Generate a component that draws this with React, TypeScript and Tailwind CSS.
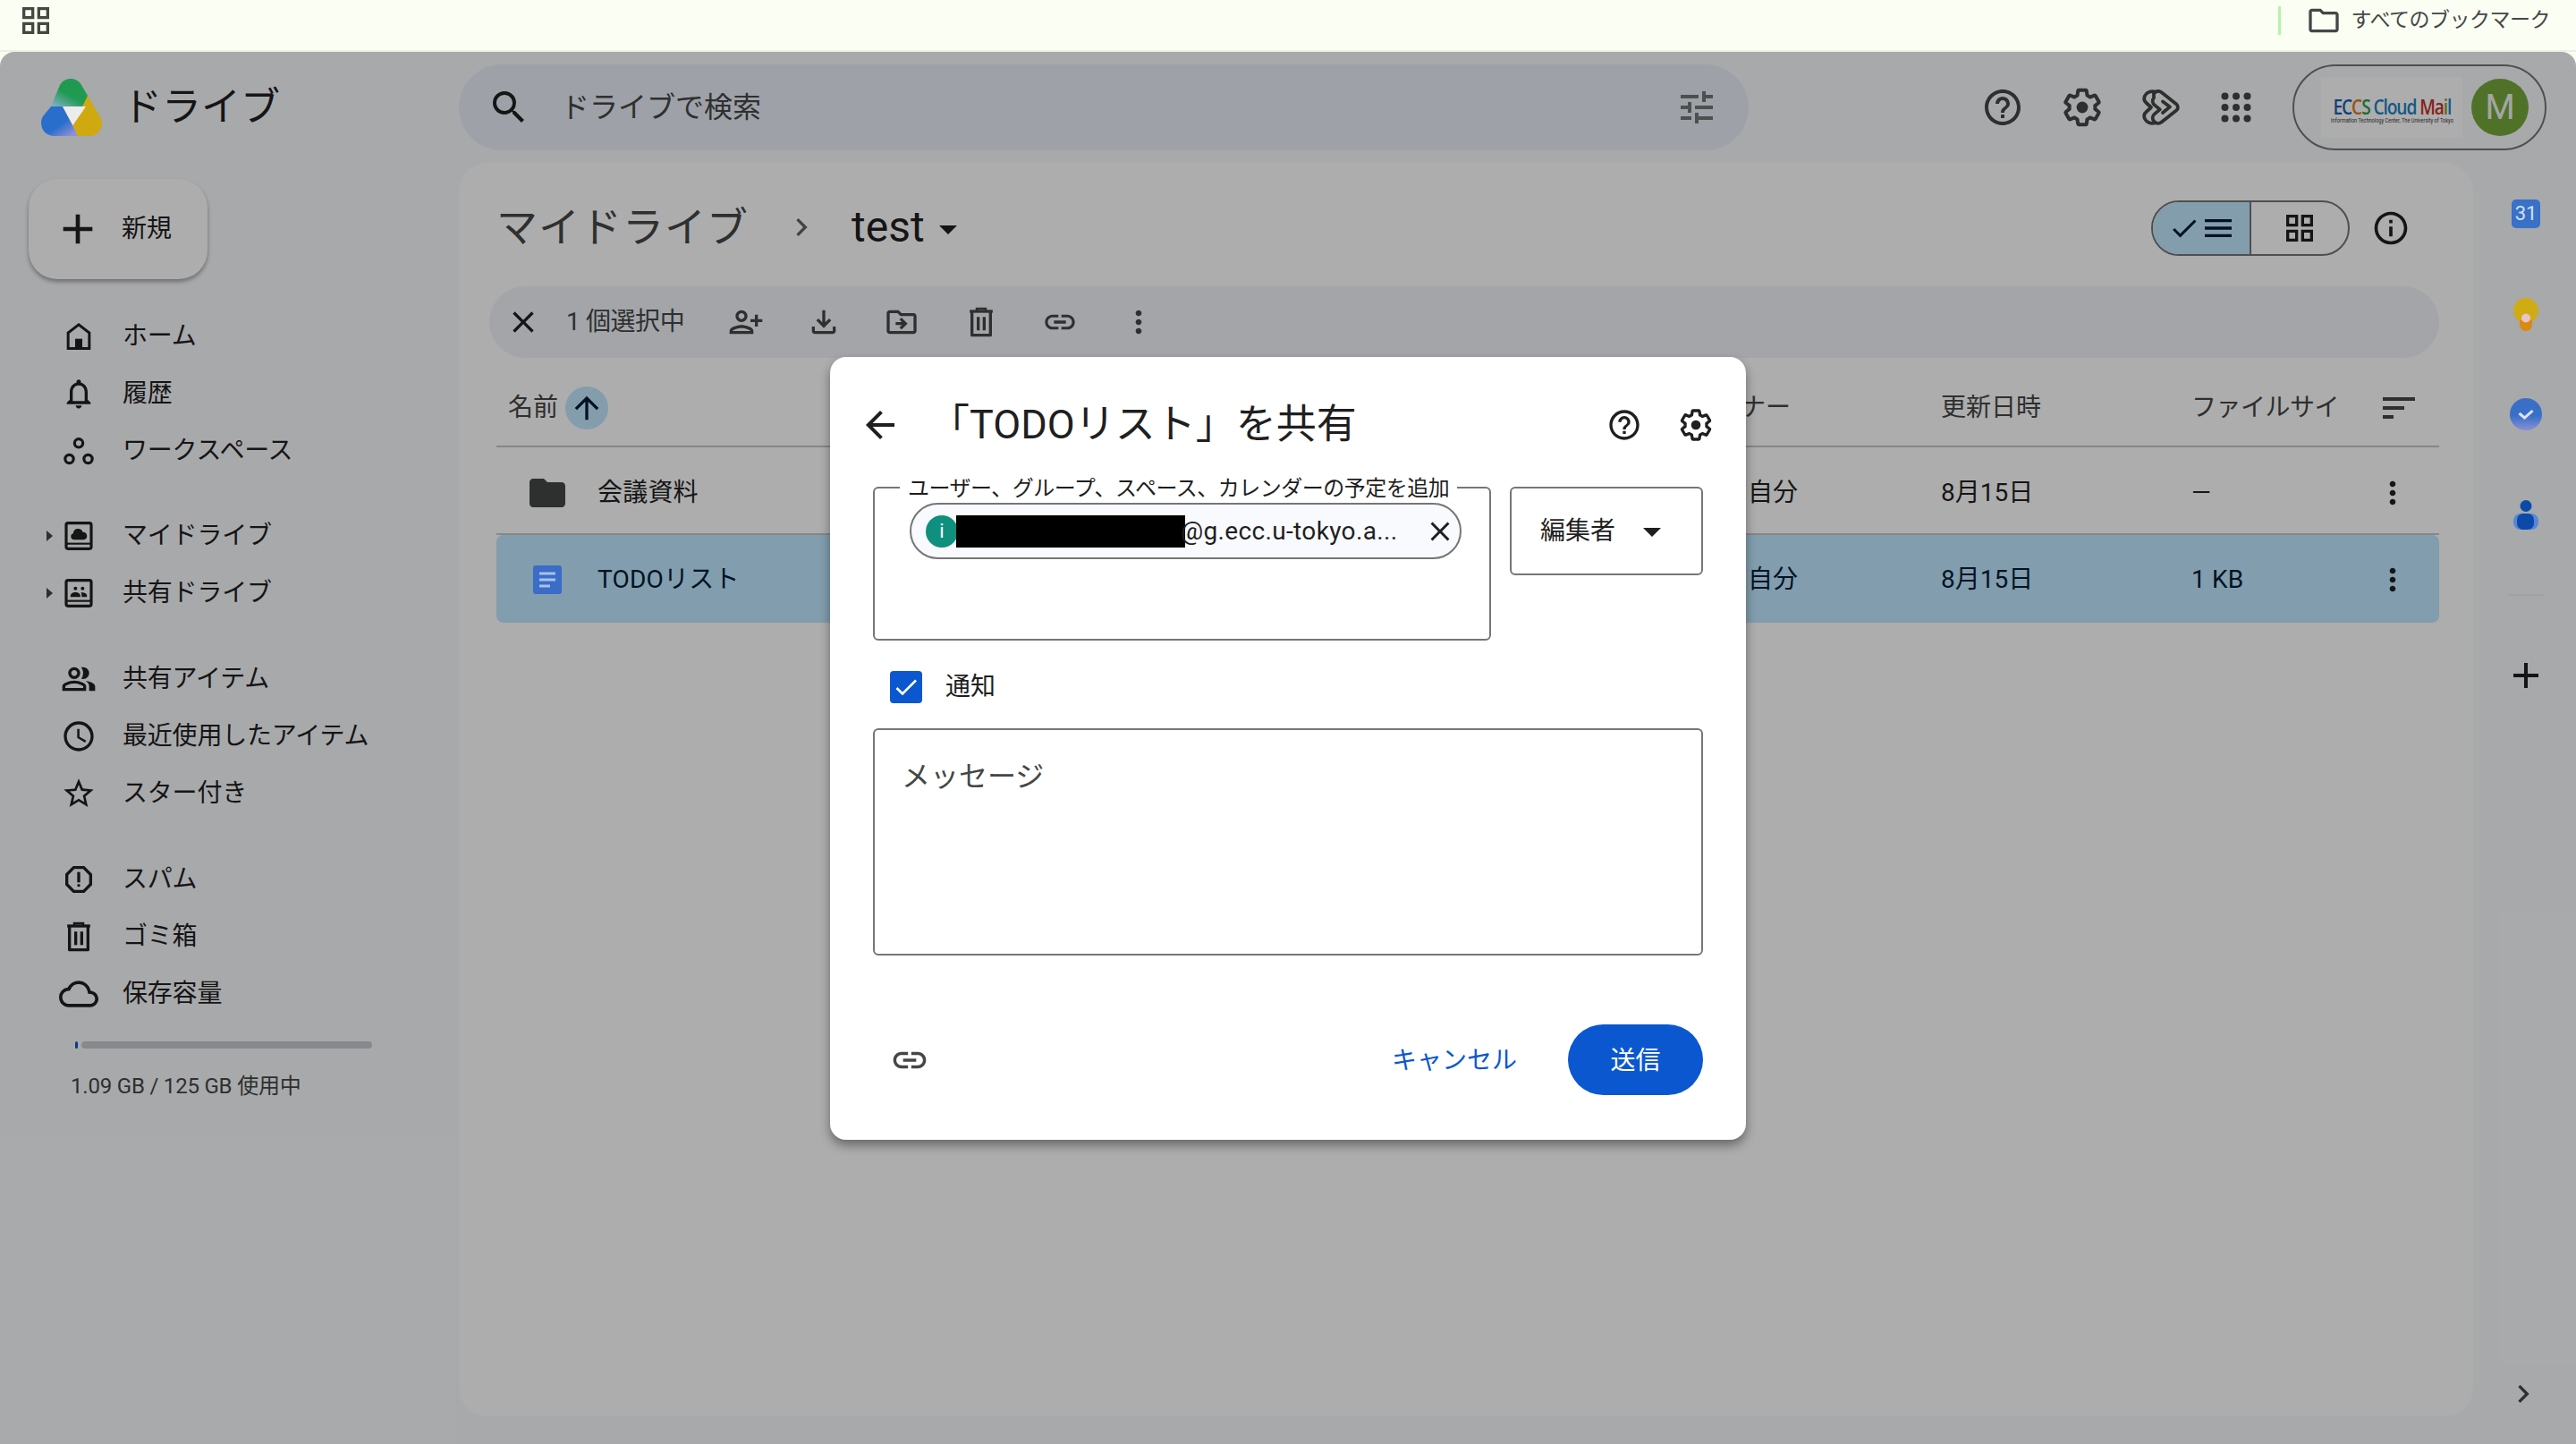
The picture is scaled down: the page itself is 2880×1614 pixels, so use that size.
import React from "react";
import {
  MdAdd, MdSearch, MdTune, MdHelpOutline, MdOutlineNotifications, MdOutlinePeopleAlt,
  MdAccessTime, MdStarBorder, MdOutlineReport, MdOutlineCloud, MdCheck, MdMenu,
  MdOutlineGridView, MdInfoOutline, MdClose, MdOutlinePersonAddAlt1, MdOutlineFileDownload,
  MdOutlineDriveFileMove, MdLink, MdMoreVert, MdArrowUpward, MdSort, MdFolder, MdArrowBack,
  MdArrowDropDown, MdChevronRight, MdOutlineFolder,
} from "react-icons/md";

const HomeIcon = () => (
  <svg viewBox="0 0 24 24" className="size-10" fill="currentColor">
    <path d="M12 3 4 9.2V21h16V9.2L12 3zm6.2 16.2H5.8v-9.1L12 5.3l6.2 4.8v9.1z" />
    <rect x="9.6" y="13.6" width="4.8" height="6" />
  </svg>
);
const WorkspaceIcon = () => (
  <svg viewBox="0 0 24 24" className="size-10" fill="none" stroke="currentColor" strokeWidth="1.9">
    <circle cx="12" cy="6.8" r="2.8" />
    <circle cx="5.7" cy="17.4" r="2.8" />
    <circle cx="18.3" cy="17.4" r="2.8" />
  </svg>
);
const MyDriveIcon = () => (
  <svg viewBox="0 0 24 24" className="size-10" fill="none">
    <rect x="3.6" y="3.4" width="16.8" height="17.2" rx="1.2" stroke="currentColor" strokeWidth="1.9" />
    <path d="M3.600 17.200h16.800" stroke="currentColor" strokeWidth="1.300" />
    <path d="M8.600 14.500a2.100 2.100 0 0 1-.3-4.100 3.300 3.300 0 0 1 6.400-1 2.600 2.600 0 0 1 .9 5.100H8.600z" fill="currentColor" />
  </svg>
);
const SharedDriveIcon = () => (
  <svg viewBox="0 0 24 24" className="size-10" fill="none">
    <rect x="3.6" y="3.4" width="16.8" height="17.2" rx="1.2" stroke="currentColor" strokeWidth="1.9" />
    <path d="M3.600 17.200h16.800" stroke="currentColor" strokeWidth="1.300" />
    <g fill="currentColor">
      <circle cx="9.800" cy="8.800" r="1.200" />
      <circle cx="14.600" cy="8.800" r="1.200" />
      <path d="M6.500 14.500v-.9c0-1.300 1.800-2.200 3.300-2.200s3.300.9 3.300 2.200v.9H6.500zM14 14.500v-1c0-.7-.2-1.300-.6-1.800 1.700-.4 4.100.4 4.100 1.900v.9H14z" />
    </g>
  </svg>
);
const TrashIcon = () => (
  <svg viewBox="0 0 24 24" className="size-10" fill="none" stroke="currentColor">
    <path d="M4.300 4.800h15.400" strokeWidth="2" />
    <path d="M9 4.500V3h6v1.500" strokeWidth="1.500" />
    <path d="M5.800 5v15.800h12.400V5" strokeWidth="2" strokeLinejoin="round" />
    <path d="M10 8.500v9M14 8.500v9" strokeWidth="2" />
  </svg>
);
const GearIcon = ({ className = "size-12" }: { className?: string }) => (
  <svg viewBox="0 0 24 24" className={className} fill="none">
    <path
      stroke="currentColor"
      strokeWidth="2"
      strokeLinejoin="round"
      d="M19.140 12.940c.04-.3.06-.61.06-.94 0-.32-.02-.64-.07-.94l2.030-1.580c.18-.14.23-.41.12-.61l-1.920-3.320c-.12-.22-.37-.29-.59-.22l-2.390.96c-.5-.38-1.030-.7-1.620-.94l-.36-2.540c-.04-.24-.24-.41-.48-.41h-3.840c-.24 0-.43.17-.47.41l-.36 2.540c-.59.24-1.130.57-1.620.94l-2.390-.96c-.22-.08-.47 0-.59.22L2.740 8.870c-.12.21-.08.47.12.61l2.030 1.580c-.05.3-.09.63-.09.94s.02.64.07.94l-2.030 1.580c-.18.14-.23.41-.12.61l1.920 3.320c.12.22.37.29.59.22l2.390-.96c.5.38 1.030.7 1.620.94l.36 2.540c.05.24.24.41.48.41h3.840c.24 0 .44-.17.47-.41l.36-2.540c.59-.24 1.130-.56 1.620-.94l2.390.96c.22.08.47 0 .59-.22l1.920-3.320c.12-.22.07-.47-.12-.61l-2.010-1.580z"
    />
    <circle cx="12" cy="12" r="3.200" fill="currentColor" />
  </svg>
);
const DriveLogo = () => (
  <svg viewBox="0 0 68 64" className="relative z-10 h-[64px] w-[68px] shrink-0">
    <defs>
      <linearGradient id="logoGreen" x1="0.1" y1="1" x2="0.45" y2="0.55">
        <stop offset="0" stopColor="#7fb0c4" />
        <stop offset="1" stopColor="#1f9a50" />
      </linearGradient>
      <linearGradient id="logoBlue" x1="0.55" y1="0.6" x2="0.85" y2="0.95">
        <stop offset="0" stopColor="#2a6ecb" />
        <stop offset="1" stopColor="#8f8fd6" />
      </linearGradient>
    </defs>
    <path d="M33 0c5 0 9 2 12 7l7 12-2 12H11L21 7c3-5 7-7 12-7z" fill="url(#logoGreen)" />
    <path d="M11 31h13l17 33H15C5 64 0 57 0 49c0-3 1-5 2-7z" fill="url(#logoBlue)" />
    <path d="M52 19l14 24c1 2 2 4 2 6 0 8-5 15-14 15H41l-5.500-12z" fill="#cfa90f" />
    <path d="M24 31h26L35.500 52z" fill="#ececec" />
  </svg>
);
const GeminiIcon = () => (
  <svg viewBox="0 0 24 24" className="size-12" fill="none" stroke="currentColor" strokeWidth="1.900" strokeLinecap="round" strokeLinejoin="round">
    <path d="M8 4.200c1.200-1.500 3-1.600 4.300-.6l8.400 6.700c1 .9 1 2.400 0 3.300l-8.400 6.700c-1.300 1-3.100.9-4.300-.6-1-1.300-.8-3 .4-4l3-2.500-3-2.500c-1.200-1-1.400-2.700-.4-4z" />
    <path d="M9 3.400C6.500 2.500 4 3.500 3 5.500c-.7 1.500-.4 3 .8 4L6.500 12l-2.700 2.500c-1.200 1-1.500 2.500-.8 4 1 2 3.500 3 6 2.100" />
    <path d="M13 8.700l4 3-4 3.300" />
  </svg>
);
const AppsIcon = () => (
  <svg viewBox="0 0 24 24" className="size-10" fill="currentColor">
    {[4.5, 12, 19.5].map((y) => [4.5, 12, 19.5].map((x) => <circle key={`${x}-${y}`} cx={x} cy={y} r="2.4" />))}
  </svg>
);

const text = "[font-family:Roboto,'Noto_Sans_CJK_JP',sans-serif]";

function NavRow({ icon, label, caret, className = "" }: { icon: React.ReactNode; label: string; caret?: boolean; className?: string }) {
  return (
    <div className={`flex h-[64px] items-center text-[28px] text-[#1f1f1f] ${className}`}>
      <div className="flex w-[20px] items-center pl-[4px]">
        {caret && <span className="h-0 w-0 border-y-[6px] border-l-[7px] border-y-transparent border-l-[#444746]" />}
      </div>
      <div className="flex size-10 items-center justify-center">{icon}</div>
      <span className="ml-[29px] whitespace-nowrap tracking-[-0.2px]">{label}</span>
    </div>
  );
}

function Sidebar() {
  return (
    <aside className="w-[513px] shrink-0 pt-[18px]">
      <button className="ml-[32px] flex h-[112px] w-[200px] items-center rounded-[32px] bg-white pl-[27px] text-[28px] text-[#1f1f1f] shadow-[0_3px_5px_rgba(0,0,0,0.35)]">
        <MdAdd className="size-14" />
        <span className="ml-[21px]">新規</span>
      </button>
      <nav className="mt-[32px] pl-[48px]">
        <NavRow icon={<HomeIcon />} label="ホーム" />
        <NavRow icon={<MdOutlineNotifications className="size-10" />} label="履歴" />
        <NavRow icon={<WorkspaceIcon />} label="ワークスペース" />
        <NavRow className="mt-[31px]" caret icon={<MyDriveIcon />} label="マイドライブ" />
        <NavRow caret icon={<SharedDriveIcon />} label="共有ドライブ" />
        <NavRow className="mt-[32px]" icon={<MdOutlinePeopleAlt className="size-10 shrink-0" />} label="共有アイテム" />
        <NavRow icon={<MdAccessTime className="size-10" />} label="最近使用したアイテム" />
        <NavRow icon={<MdStarBorder className="size-10" />} label="スター付き" />
        <NavRow className="mt-[32px]" icon={<MdOutlineReport className="size-10" />} label="スパム" />
        <NavRow icon={<TrashIcon />} label="ゴミ箱" />
        <NavRow icon={<MdOutlineCloud className="size-11 shrink-0" />} label="保存容量" />
      </nav>
      <div className="ml-[84px] mt-[21px] flex h-[8px] w-[332px] gap-[4px]">
        <div className="h-full w-[3px] rounded-full bg-[#0b57d0]" />
        <div className="h-full flex-1 rounded-full bg-[#c7cacf]" />
      </div>
      <div className="ml-[79px] mt-[26px] text-[24px] leading-[32px] tracking-[-0.2px] text-[#444746]">1.09 GB / 125 GB 使用中</div>
    </aside>
  );
}

function Header() {
  return (
    <header className="flex h-[124px] items-center">
      <div className="flex w-[513px] shrink-0 items-center pl-[46px]">
        <DriveLogo />
        <span className="ml-[23px] text-[44px] leading-none text-[#1f1f1f]">ドライブ</span>
      </div>
      <div className="flex h-[96px] w-[1442px] shrink-0 items-center rounded-full bg-[#e9eef6] pl-[32px] pr-[34px] text-[#444746]">
        <MdSearch className="size-12 text-[#1f1f1f]" />
        <span className="ml-[34px] text-[32px]">ドライブで検索</span>
        <MdTune className="ml-auto size-12 text-[#747775]" />
      </div>
      <div className="ml-[260px] flex items-center text-[#444746]">
        <MdHelpOutline className="size-12" />
        <div className="ml-[41px]"><GearIcon /></div>
        <div className="ml-[40px]"><GeminiIcon /></div>
        <div className="ml-[40px]"><AppsIcon /></div>
      </div>
      <div className="ml-[43px] flex h-[96px] w-[284px] items-center rounded-full border-2 border-[#747775] pl-[30px]">
        <div className="flex h-[68px] w-[158px] flex-col items-center justify-center bg-[#ffffff]">
          <div className="mt-[6px] origin-center scale-x-[0.8] whitespace-nowrap text-[24px] font-semibold leading-[22px] tracking-[-1.4px] [font-family:'Open_Sans',sans-serif]">
            <span className="text-[#1a5fb4]">EC</span><span className="text-[#e2791f]">C</span><span className="text-[#2e9e4f]">S </span>
            <span className="text-[#1b84c4]">Cloud </span><span className="text-[#c8322b]">Ma</span><span className="text-[#8a9a1f]">i</span><span className="text-[#1b84c4]">l</span>
          </div>
          <div className="mt-[1px] scale-x-[0.8] whitespace-nowrap text-[7px] leading-[8px] text-[#333]">Information Technology Center, The University of Tokyo</div>
        </div>
        <div className="ml-[10px] flex size-16 items-center justify-center rounded-full bg-[#75a83c] text-[38px] text-[#f4f4f4]">M</div>
      </div>
    </header>
  );
}

const columns = "grid grid-cols-[1335px_280px_280px_176px_97px] items-center";

function FileRow({ icon, name, size, selected }: { icon: React.ReactNode; name: string; size: string; selected?: boolean }) {
  return (
    <div className={`${columns} h-[98px] text-[28px] ${selected ? "rounded-[8px] bg-[#c0e8ff] pt-[1px] text-[#001d35]" : "border-b-2 border-[#c7c7c7] pt-[5px] text-[#1f1f1f]"}`}>
      <div className="flex items-center pl-[33px]">
        <div className="flex w-[48px] justify-center">{icon}</div>
        <span className="ml-[32px] tracking-[0.2px]">{name}</span>
      </div>
      <div className="pl-[64px]">自分</div>
      <div>8月15日</div>
      <div className="tracking-[0.2px]">{size}</div>
      <div className="flex justify-center text-[#1f1f1f]"><MdMoreVert className="size-10" /></div>
    </div>
  );
}

function Main() {
  return (
    <main className="h-[1401px] w-[2252px] shrink-0 rounded-[32px] bg-white">
      <div className="flex h-[138px] items-center pl-[42px] pr-[70px] text-[#1f1f1f]">
        <span className="mt-[6px] text-[46px] leading-none tracking-[1px] text-[#444746]">マイドライブ</span>
        <MdChevronRight className="ml-[39px] mt-[6px] size-10 text-[#5f6368]" />
        <span className="ml-[36px] mt-[6px] text-[48px] leading-none">test</span>
        <MdArrowDropDown className="ml-[2px] mt-[10px] size-12" />
        <div className="ml-auto mt-[8px] flex h-[62px] w-[222px] overflow-hidden rounded-full border-2 border-[#747775]">
          <div className="flex w-[110px] items-center justify-center border-r-2 border-[#747775] bg-[#c2e7ff] pl-[2px] text-[#001d35]">
            <MdCheck className="size-9" />
            <MdMenu className="size-10" />
          </div>
          <div className="flex flex-1 items-center justify-center"><MdOutlineGridView className="size-10" /></div>
        </div>
        <MdInfoOutline className="ml-[24px] mt-[8px] size-11" />
      </div>
      <div className="ml-[34px] flex h-[80px] w-[2180px] items-center rounded-full bg-[#f0f4f9] pl-[18px] text-[#444746]">
        <MdClose className="size-10 text-[#1f1f1f]" />
        <span className="ml-[28px] w-[147px] whitespace-nowrap text-[28px] tracking-[-0.4px]">1 個選択中</span>
        <MdOutlinePersonAddAlt1 className="ml-[34px] size-10" />
        <MdOutlineFileDownload className="ml-[47px] size-10" />
        <MdOutlineDriveFileMove className="ml-[47px] size-10" />
        <div className="ml-[49px]"><TrashIcon /></div>
        <MdLink className="ml-[48px] size-10" />
        <MdMoreVert className="ml-[48px] size-10" />
      </div>
      <div className="ml-[42px] w-[2172px]">
        <div className={`${columns} h-[100px] border-b-2 border-[#c7c7c7] pt-[14px] text-[28px] text-[#444746]`}>
          <div className="flex items-center pl-[13px]">
            <span>名前</span>
            <span className="ml-[8px] flex size-12 items-center justify-center rounded-full bg-[#c2e7ff] text-[#001d35]"><MdArrowUpward className="size-10" /></span>
          </div>
          <div>オーナー</div>
          <div>更新日時</div>
          <div className="whitespace-nowrap tracking-[-0.5px]">ファイルサイ</div>
          <div className="flex justify-center pl-[14px]"><MdSort className="size-12" /></div>
        </div>
        <FileRow icon={<MdFolder className="size-12 text-[#444746]" />} name="会議資料" size="—" />
        <FileRow
          selected
          size="1 KB"
          name="TODOリスト"
          icon={
            <svg viewBox="0 0 32 32" className="relative z-10 size-8">
              <rect width="32" height="32" rx="3" fill="#3a6cc8" />
              <path d="M7 9h18M7 16h18M7 23h12" stroke="#a9c2e8" strokeWidth="3" />
            </svg>
          }
        />
      </div>
    </main>
  );
}

function Rail() {
  return (
    <aside className="flex flex-1 flex-col items-center pl-[3px] pt-[1px]">
      <div className="flex h-[112px] items-center">
        <div className="relative z-10 flex size-8 items-center justify-center rounded-[5px] bg-[#3a70c8] text-[22px] leading-none text-[#cfe0f5]">31</div>
      </div>
      <div className="flex h-[112px] items-center">
        <svg viewBox="0 0 28 37" className="relative z-10 h-[37px] w-[28px]">
          <circle cx="14" cy="14" r="14" fill="#cfab14" />
          <path d="M7 25h14v5a7 7 0 0 1-14 0z" fill="#d98a10" />
          <circle cx="14" cy="22.500" r="5" fill="#e6c4c8" />
        </svg>
      </div>
      <div className="flex h-[112px] items-center">
        <svg viewBox="0 0 36 36" className="relative z-10 size-9">
          <defs>
            <linearGradient id="tasksBlue" x1="0" y1="0" x2="0" y2="1">
              <stop offset="0.55" stopColor="#3a6fc8" />
              <stop offset="1" stopColor="#8a90d2" />
            </linearGradient>
          </defs>
          <circle cx="18" cy="18" r="18" fill="url(#tasksBlue)" />
          <path d="M10.500 17l6 5 9-8" fill="none" stroke="#dbe4f4" strokeWidth="3" />
        </svg>
      </div>
      <div className="flex h-[112px] items-center">
        <svg viewBox="0 0 28 33" className="relative z-10 h-[33px] w-[28px]">
          <circle cx="14" cy="6.500" r="6.500" fill="#0b4aa8" />
          <rect x="0" y="15" width="28" height="18" rx="8" fill="#5a86d8" />
          <rect x="4" y="15" width="19" height="18" rx="7" fill="#0b4aa8" />
        </svg>
      </div>
      <div className="mt-[33px] h-[2px] w-[40px] bg-[#ededed]" />
      <MdAdd className="mt-[65px] size-12 text-[#1f1f1f]" />
      <MdChevronRight className="mb-[36px] ml-[-10px] mt-auto size-10 translate-x-[2px] text-[#444746]" />
    </aside>
  );
}

function ShareDialog() {
  return (
    <div className="absolute left-[928px] top-[341px] z-20 flex h-[875px] w-[1024px] flex-col rounded-[18px] bg-white px-[48px] text-[#1f1f1f] shadow-[0_6px_12px_rgba(0,0,0,0.4)]">
      <div className="flex h-[145px] shrink-0 items-center pt-[6px]">
        <MdArrowBack className="ml-[-16px] size-12 shrink-0" />
        <span className="ml-[31px] whitespace-nowrap text-[45px] leading-none">「TODOリスト」を共有</span>
        <MdHelpOutline className="ml-auto size-10 translate-x-[12px]" />
        <div className="ml-[40px] translate-x-[12px]"><GearIcon className="size-10" /></div>
      </div>
      <div className="flex h-[172px] shrink-0 items-start">
        <div className="relative h-[172px] w-[691px] rounded-[6px] border-2 border-[#747775] pl-[39px] pt-[16px]">
          <span className="absolute left-[28px] top-[-12px] whitespace-nowrap bg-white px-[9px] text-[24px] leading-[24px] tracking-[-0.5px] text-[#1f1f1f]">
            ユーザー、グループ、スペース、カレンダーの予定を追加
          </span>
          <div className="flex h-[63px] w-[617px] items-center rounded-full border-2 border-[#747775] bg-[#f8fafd] pl-[16px]">
            <span className="flex size-9 shrink-0 items-center justify-center rounded-full bg-[#0f8f7e] text-[22px] text-white">i</span>
            <span className="ml-[-2px] h-[36px] w-[256px] shrink-0 bg-black" />
            <span className="ml-[-5px] w-[241px] shrink-0 whitespace-nowrap text-[28px] tracking-[0.35px] text-[#1f1f1f]">@g.ecc.u-tokyo.a...</span>
            <MdClose className="ml-[31px] size-9 shrink-0" />
          </div>
        </div>
        <div className="ml-[21px] flex h-[99px] w-[216px] items-center rounded-[6px] border-2 border-[#747775] pl-[32px]">
          <span className="text-[28px]">編集者</span>
          <MdArrowDropDown className="ml-[17px] size-12" />
        </div>
      </div>
      <div className="flex h-[98px] shrink-0 items-center pl-[19px] pt-[6px]">
        <span className="flex size-9 items-center justify-center rounded-[4px] bg-[#0b57d0]">
          <MdCheck className="size-8 text-white" />
        </span>
        <span className="ml-[26px] text-[28px]">通知</span>
      </div>
      <div className="h-[254px] shrink-0 rounded-[6px] border-2 border-[#747775] pl-[30px] pt-[28px] text-[32px] leading-[48px] text-[#444746]">メッセージ</div>
      <div className="mt-[77px] flex h-[79px] shrink-0 items-center">
        <MdLink className="ml-[19px] size-11 text-[#444746]" />
        <span className="ml-auto mt-[2px] text-[28px] text-[#0b57d0]">キャンセル</span>
        <button className="ml-[57px] h-[79px] w-[151px] rounded-full bg-[#0b57d0] pt-[2px] text-[28px] text-white">送信</button>
      </div>
    </div>
  );
}

export default function App() {
  return (
    <div className={`relative h-[1614px] w-[2880px] overflow-hidden bg-[#fbfef3] ${text}`}>
      <div className="flex h-[58px] items-center border-b-2 border-[#eceee6] pb-[10px] pl-[20px] pr-[29px] text-[#444746]">
        <MdOutlineGridView className="size-10 text-[#44483f]" />
        <div className="ml-auto h-[32px] w-[3px] bg-[#b6f2ae]" />
        <MdOutlineFolder className="ml-[28px] size-10" />
        <span className="ml-[11px] whitespace-nowrap text-[23px] tracking-[-0.5px]">すべてのブックマーク</span>
      </div>
      <div className="relative h-[1556px] overflow-hidden rounded-t-[16px] bg-[#f8fafd]">
        <Header />
        <div className="flex h-[1432px]">
          <Sidebar />
          <Main />
          <Rail />
        </div>
        <div className="absolute inset-0 bg-black/32" />
        <ShareDialog />
      </div>
    </div>
  );
}
